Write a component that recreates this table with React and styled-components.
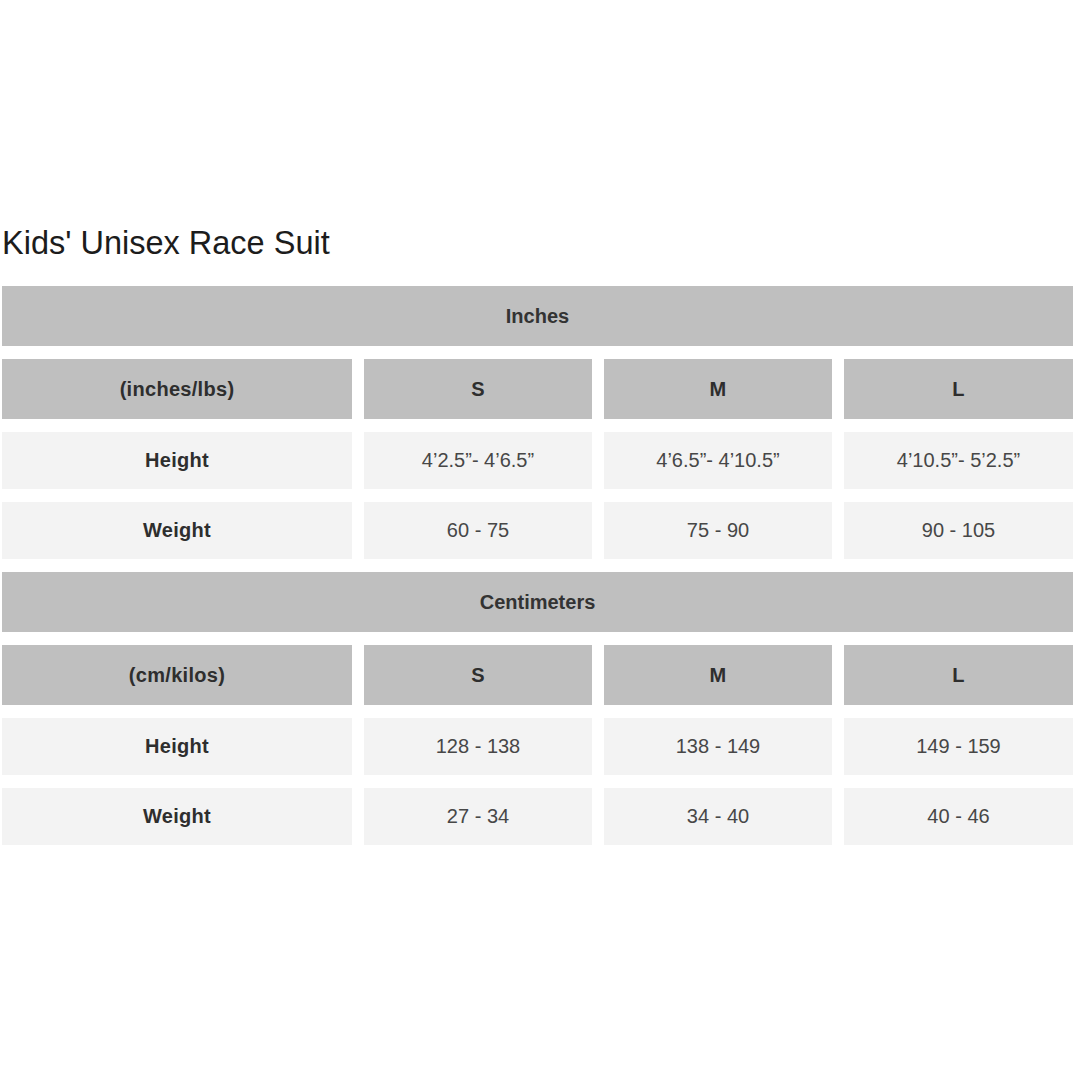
import React from 'react';
import styled, {createGlobalStyle} from 'styled-components';

const GlobalStyle = createGlobalStyle`
  body {
    margin: 0;
    background: #fff;
    font-family: "Liberation Sans", Arial, sans-serif;
  }
`

const Page = styled.div`
  width: 1080px;
  height: 1080px;
  box-sizing: border-box;
  padding: 224px 7px 0 2px;
`
const Title = styled.h1`
  margin: 0 0 23px 0;
  font-size: 32.5px;
  line-height: 39px;
  font-weight: 400;
  color: #1c1c1c;
`
const Chart = styled.div`
  display: flex;
  flex-direction: column;
  gap: 13px;
`
const Banner = styled.div`
  height: 60px;
  background: #bfbfbf;
  display: flex;
  align-items: center;
  justify-content: center;
  font-size: 20px;
  font-weight: bold;
  color: #333;
`
const Row = styled.div`
  display: grid;
  grid-template-columns: 350px 228px 228px 229px;
  column-gap: 12px;
  height: ${p => (p.$head ? '60px' : '57px')};
`
const Cell = styled.div`
  display: flex;
  align-items: center;
  justify-content: center;
  background: ${p => (p.$head ? '#bfbfbf' : '#f3f3f3')};
  color: ${p => (p.$head || p.$label ? '#2e2e2e' : '#474747')};
  font-size: 20px;
  font-weight: ${p => (p.$head || p.$label ? 'bold' : 'normal')};
  letter-spacing: ${p => (p.$head || p.$label ? '0.3px' : '0')};
`

const sections = [
  {
    name: 'Inches',
    unit: '(inches/lbs)',
    rows: [
      ['Height', '4\u20192.5\u201d- 4\u20196.5\u201d', '4\u20196.5\u201d- 4\u201910.5\u201d', '4\u201910.5\u201d- 5\u20192.5\u201d'],
      ['Weight', '60 - 75', '75 - 90', '90 - 105'],
    ],
  },
  {
    name: 'Centimeters',
    unit: '(cm/kilos)',
    rows: [
      ['Height', '128 - 138', '138 - 149', '149 - 159'],
      ['Weight', '27 - 34', '34 - 40', '40 - 46'],
    ],
  },
]

const App = () => {
  return (
    <Page>
      <GlobalStyle />
      <Title>Kids' Unisex Race Suit</Title>
      <Chart>
        {sections.map(s => (
          <React.Fragment key={s.name}>
            <Banner>{s.name}</Banner>
            <Row $head>
              <Cell $head>{s.unit}</Cell>
              <Cell $head>S</Cell>
              <Cell $head>M</Cell>
              <Cell $head>L</Cell>
            </Row>
            {s.rows.map(r => (
              <Row key={r[0]}>
                <Cell $label>{r[0]}</Cell>
                <Cell>{r[1]}</Cell>
                <Cell>{r[2]}</Cell>
                <Cell>{r[3]}</Cell>
              </Row>
            ))}
          </React.Fragment>
        ))}
      </Chart>
    </Page>
  )
}

export default App;
